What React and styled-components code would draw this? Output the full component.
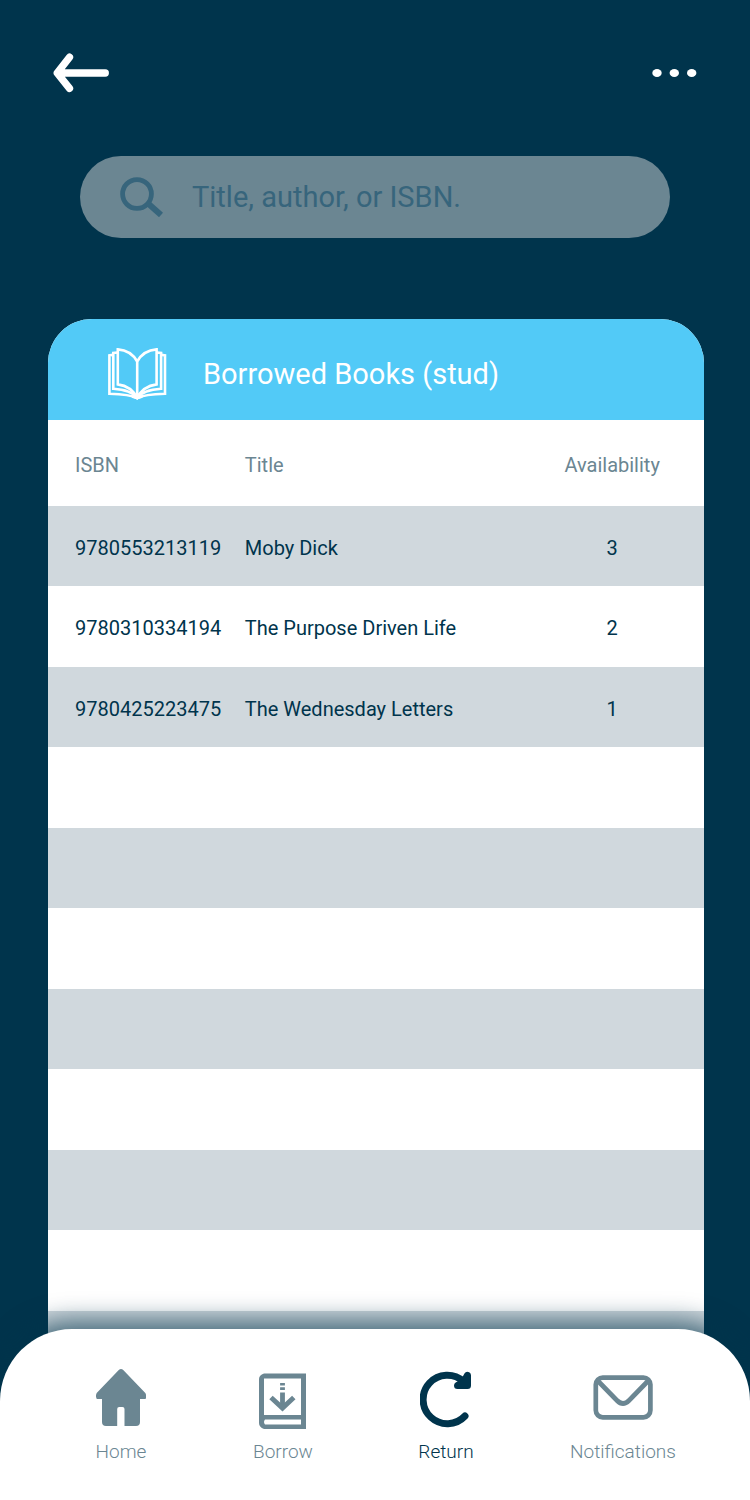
import React from "react";
import styled, { createGlobalStyle, css } from "styled-components";

const navy = "#00344c";
const slate = "#6b8692";

const GlobalStyle = createGlobalStyle`
  *, *::before, *::after { box-sizing: border-box; }
  body {
    margin: 0;
    background: ${navy};
    color: ${navy};
    font-family: Roboto, "Liberation Sans", sans-serif;
  }
  button, input { font: inherit; }
`;

const Page = styled.div`
  display: flex;
  flex-direction: column;
  min-height: 100vh;
`;

const TopBar = styled.header`
  display: flex;
  align-items: center;
  justify-content: space-between;
  padding: 53px 53px 0;
`;

const IconButton = styled.button`
  display: flex;
  padding: 0;
  border: 0;
  background: none;
  color: #fff;
  cursor: pointer;
`;

const SearchBar = styled.form`
  display: flex;
  align-items: center;
  gap: 28px;
  height: 82px;
  margin: 63px 80px 0;
  padding: 0 40px;
  border-radius: 41px;
  background: ${slate};
  color: #37657c;
`;

const SearchLabel = styled.label`
  display: flex;
`;

const SearchInput = styled.input`
  flex: 1;
  min-width: 0;
  padding: 0;
  border: 0;
  outline: 0;
  background: none;
  color: ${navy};
  font-size: 29px;
  line-height: 36px;

  &::placeholder {
    color: #37657c;
    opacity: 1;
  }
`;

const Card = styled.main`
  flex: 1;
  margin: 81px 46px 0 48px;
  border-radius: 44px 44px 0 0;
  background: #fff;
  overflow: hidden;
`;

const CardHeader = styled.div`
  display: flex;
  align-items: center;
  gap: 36px;
  height: 101px;
  padding: 8px 60px 0;
  background: #52caf7;
  color: #fff;
`;

const CardTitle = styled.h1`
  margin: 0;
  font-size: 29px;
  font-weight: 400;
  line-height: 36px;
`;

const BookTable = styled.table`
  width: 100%;
  table-layout: fixed;
  border-collapse: collapse;
  font-size: 20px;
  line-height: 24px;
`;

const HeadRow = styled.tr`
  height: 86px;
  color: ${slate};
`;

const BookRow = styled.tr`
  height: 81px;

  &:nth-child(odd) {
    height: 80px;
    background: #d0d8dd;
  }
`;

const cellStyle = css`
  width: ${(p) => p.$width};
  padding: 3px 0 0 ${(p) => (p.$first ? "27px" : "0")};
  font-weight: 400;
  text-align: ${(p) => (p.$center ? "center" : "left")};
`;

const HeadCell = styled.th`
  ${cellStyle}
`;

const Cell = styled.td`
  ${cellStyle}
`;

const BottomNav = styled.nav`
  position: sticky;
  bottom: 0;
  display: grid;
  grid-template-columns: 162fr 162fr 164fr 190fr;
  height: 171px;
  margin-top: -62px;
  padding: 40px 32px 0 40px;
  border-radius: 72px 72px 0 0;
  background: #fff;
  box-shadow: 0 -9px 24px rgba(0, 52, 76, 0.65);
`;

const NavLink = styled.a`
  display: flex;
  flex-direction: column;
  align-items: center;
  gap: 11px;
  color: ${(p) => (p.$active ? navy : slate)};
  font-size: 19px;
  font-weight: 300;
  line-height: 24px;
  text-decoration: none;
`;

const BackIcon = () => (
  <svg width="56" height="40" viewBox="0 0 56 40" fill="none" stroke="currentColor" strokeWidth="7.3" strokeLinecap="round" strokeLinejoin="round" aria-hidden="true">
    <path d="M16.5 4.2 4.2 20l12.3 15.4M6 20h46.3" />
    <path d="M8 16v8" />
  </svg>
);

const MoreIcon = () => (
  <svg width="45" height="8" viewBox="0 0 45 8" fill="currentColor" aria-hidden="true">
    <ellipse cx="5" cy="4" rx="4.7" ry="4" />
    <ellipse cx="22.3" cy="4" rx="4.7" ry="4" />
    <ellipse cx="39.7" cy="4" rx="4.7" ry="4" />
  </svg>
);

const SearchIcon = () => (
  <svg width="44" height="40" viewBox="0 0 44 40" fill="none" stroke="currentColor" aria-hidden="true">
    <circle cx="17" cy="17" r="14.4" strokeWidth="4.8" />
    <path d="M27 25.5 41 38" strokeWidth="6" />
  </svg>
);

const BookIcon = () => (
  <svg width="59" height="52" viewBox="0 0 59 52" fill="none" stroke="currentColor" strokeWidth="2.6" aria-hidden="true">
    <path d="M29.2 13.5C25 6 18 2 9.8 1.4v35C18 37.5 25 41.5 29.2 50M29.2 13.5C33.4 6 40.4 2 48.6 1.4v35C40.4 37.5 33.4 41.5 29.2 50M29.2 13v37" />
    <path d="M9.8 4.5 5.3 5v35.8C14 41.3 24 43 29.2 50 34.4 43 44.4 41.3 53.1 40.8V5l-4.5-.5" />
    <path d="M5.3 6.8 1.4 7.4v38.3C12 46 22 46.3 29.2 50c7.2-3.7 17.2-4 27.8-4.3V7.4l-3.9-.6" />
    <path d="m24 48.6 5.2 1.6 5.2-1.6" />
  </svg>
);

const HomeIcon = () => (
  <svg width="50" height="60" viewBox="0 0 50 60" fill="currentColor" aria-hidden="true">
    <path d="M23 .8q2-1.500 4 0L49.300 24Q51 27 49.500 30H44v23q0 4-4 4H28.500V40q0-2-2-2h-3.300q-2 0-2 2v17H10q-4 0-4-4V30H.8Q-.8 27 .7 24Z" />
  </svg>
);

const BorrowIcon = () => (
  <svg width="48" height="60" viewBox="0 0 48 60" fill="none" stroke="currentColor" aria-hidden="true">
    <path fill="currentColor" stroke="none" fillRule="evenodd" d="M5 4.5H47V60H5Q0 58 0 54V10Q0 6 5 4.5ZM5 9.5V46H42V9.5ZM6 50.500Q4 53 6 55.500H42V50.500Z" />
    <path d="M23.5 14v2.5M23.5 18.3V21M23.5 23.5V38" strokeWidth="4.8" />
    <path d="m12 28.500 11.500 10.500 11.300-10.500" strokeWidth="5" />
  </svg>
);

const ReturnIcon = () => (
  <svg width="52" height="60" viewBox="0 0 52 60" fill="none" stroke="currentColor" strokeWidth="7" strokeLinecap="round" strokeLinejoin="round" aria-hidden="true">
    <path d="M45 47A24.200 24.200 0 1 1 43.500 12.500" />
    <path d="M47.500 6.300V16.500H37.500L44 12.500Z" fill="currentColor" />
  </svg>
);

const MailIcon = () => (
  <svg width="60" height="60" viewBox="0 0 60 60" fill="none" stroke="currentColor" strokeWidth="4.7" strokeLinejoin="round" aria-hidden="true">
    <rect x="2.8" y="8.6" width="54.6" height="39.7" rx="7" />
    <path d="M4.500 11.500 24 31.500q6 6 12 0L55.500 11.500" />
  </svg>
);

const books = [
  { isbn: "9780553213119", title: "Moby Dick", available: 3 },
  { isbn: "9780310334194", title: "The Purpose Driven Life", available: 2 },
  { isbn: "9780425223475", title: "The Wednesday Letters", available: 1 },
];

const ROW_COUNT = 11;
const rows = Array.from({ length: ROW_COUNT }, (_, i) => books[i] || {});

const links = [
  { label: "Home", Icon: HomeIcon },
  { label: "Borrow", Icon: BorrowIcon },
  { label: "Return", Icon: ReturnIcon, active: true },
  { label: "Notifications", Icon: MailIcon },
];

export default function App() {
  return (
    <Page>
      <GlobalStyle />
      <TopBar>
        <IconButton type="button" aria-label="Back">
          <BackIcon />
        </IconButton>
        <IconButton type="button" aria-label="More options">
          <MoreIcon />
        </IconButton>
      </TopBar>

      <SearchBar role="search" onSubmit={(e) => e.preventDefault()}>
        <SearchLabel htmlFor="book-search" aria-label="Search books">
          <SearchIcon />
        </SearchLabel>
        <SearchInput id="book-search" type="text" placeholder="Title, author, or ISBN." />
      </SearchBar>

      <Card>
        <CardHeader>
          <BookIcon />
          <CardTitle>Borrowed Books (stud)</CardTitle>
        </CardHeader>
        <BookTable>
          <thead>
            <HeadRow>
              <HeadCell scope="col" $width="30%" $first>ISBN</HeadCell>
              <HeadCell scope="col" $width="42%">Title</HeadCell>
              <HeadCell scope="col" $width="28%" $center>Availability</HeadCell>
            </HeadRow>
          </thead>
          <tbody>
            {rows.map((book, i) => (
              <BookRow key={i}>
                <Cell $first>{book.isbn}</Cell>
                <Cell>{book.title}</Cell>
                <Cell $center>{book.available}</Cell>
              </BookRow>
            ))}
          </tbody>
        </BookTable>
      </Card>

      <BottomNav aria-label="Main">
        {links.map(({ label, Icon, active }) => (
          <NavLink key={label} href="#" $active={active} aria-current={active ? "page" : undefined}>
            <Icon />
            {label}
          </NavLink>
        ))}
      </BottomNav>
    </Page>
  );
}
